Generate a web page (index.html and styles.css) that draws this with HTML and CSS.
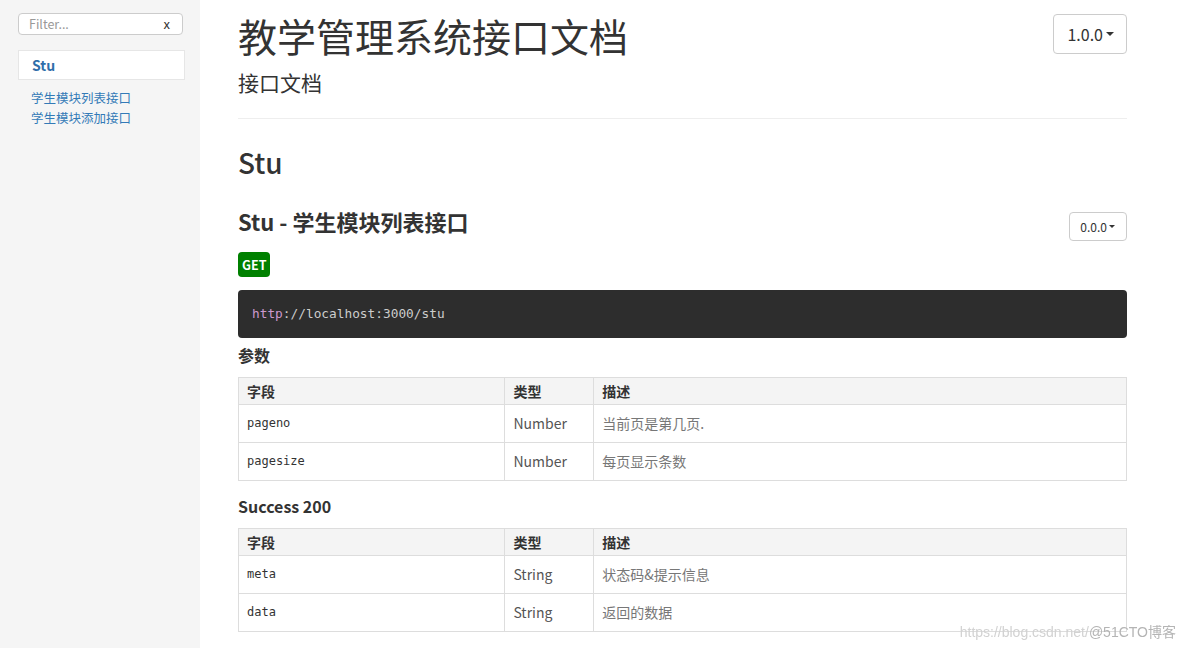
FILE: index.html
```html
<!DOCTYPE html>
<html lang="zh-CN">
<head>
<meta charset="utf-8">
<title>教学管理系统接口文档</title>
<link rel="stylesheet" href="styles.css">
</head>
<body>
<div class="layout">
  <nav class="sidebar">
    <div class="filter">
      <input class="filter-input" type="text" placeholder="Filter...">
      <span class="filter-clear">x</span>
    </div>
    <div class="nav-group">Stu</div>
    <ul class="nav-links">
      <li><a href="#list">学生模块列表接口</a></li>
      <li><a href="#add">学生模块添加接口</a></li>
    </ul>
  </nav>

  <main class="content">
    <header class="page-header">
      <div class="page-heading">
        <h1 class="title">教学管理系统接口文档</h1>
        <p class="subtitle">接口文档</p>
      </div>
      <button class="version-btn version-lg">1.0.0<span class="caret"></span></button>
    </header>
    <hr class="divider">

    <h2 class="group-title">Stu</h2>

    <article class="api" id="list">
      <div class="api-head">
        <h3 class="api-title">Stu - 学生模块列表接口</h3>
        <button class="version-btn version-sm">0.0.0<span class="caret caret-sm"></span></button>
      </div>
      <span class="method">GET</span>
      <pre class="endpoint"><code><span class="tok-proto">http</span>://localhost:3000/stu</code></pre>

      <h4 class="section-title">参数</h4>
      <table class="fields">
        <colgroup><col class="col-field"><col class="col-type"><col class="col-desc"></colgroup>
        <thead>
          <tr><th>字段</th><th>类型</th><th>描述</th></tr>
        </thead>
        <tbody>
          <tr><td class="f-name">pageno</td><td class="f-type">Number</td><td class="f-desc">当前页是第几页.</td></tr>
          <tr><td class="f-name">pagesize</td><td class="f-type">Number</td><td class="f-desc">每页显示条数</td></tr>
        </tbody>
      </table>

      <h4 class="section-title section-success">Success 200</h4>
      <table class="fields">
        <colgroup><col class="col-field"><col class="col-type"><col class="col-desc"></colgroup>
        <thead>
          <tr><th>字段</th><th>类型</th><th>描述</th></tr>
        </thead>
        <tbody>
          <tr><td class="f-name">meta</td><td class="f-type">String</td><td class="f-desc">状态码&amp;提示信息</td></tr>
          <tr><td class="f-name">data</td><td class="f-type">String</td><td class="f-desc">返回的数据</td></tr>
        </tbody>
      </table>
    </article>
  </main>
</div>
<div class="watermark"><span class="wm-url">https://blog.csdn.net/</span><span class="wm-brand">@51CTO博客</span></div>
</body>
</html>
```

FILE: styles.css
```css
html, body {
  margin: 0;
  padding: 0;
}

body {
  font-family: "Noto Sans CJK SC", "Noto Sans", sans-serif;
  font-size: 14px;
  color: #333;
  background: #fff;
}

.layout {
  display: flex;
  min-height: 100vh;
}

/* ---------- sidebar ---------- */
.sidebar {
  flex: none;
  width: 200px;
  box-sizing: border-box;
  background: #f5f5f5;
  padding: 13px 15px 0 18px;
}

.filter {
  display: flex;
  align-items: center;
  width: 165px;
  height: 22px;
  box-sizing: border-box;
  background: #fff;
  border: 1px solid #ccc;
  border-radius: 4px;
  padding: 0 12px 0 10px;
}

.filter-input {
  flex: 1;
  min-width: 0;
  border: 0;
  outline: 0;
  padding: 0;
  margin: 0;
  background: transparent;
  font-family: inherit;
  font-size: 12.5px;
  line-height: 18px;
  color: #333;
}

.filter-input::placeholder {
  color: #999;
}

.filter-clear {
  font-size: 13px;
  line-height: 18px;
  color: #333;
}

.nav-group {
  margin-top: 15px;
  height: 30px;
  box-sizing: border-box;
  background: #fff;
  border: 1px solid #e6e6e6;
  padding-left: 13px;
  line-height: 28px;
  font-size: 14px;
  font-weight: 700;
  color: #2f6ea9;
}

.nav-links {
  list-style: none;
  margin: 8px 0 0;
  padding: 0 0 0 13px;
}

.nav-links li {
  line-height: 20px;
  font-size: 12.5px;
}

.nav-links a {
  color: #337ab7;
  text-decoration: none;
}

/* ---------- main ---------- */
.content {
  flex: 1;
  min-width: 0;
  padding: 0 57px 0 38px;
}

.page-header {
  display: flex;
  justify-content: space-between;
  align-items: flex-start;
}

.title {
  margin: 13px 0 0;
  font-size: 39px;
  line-height: 44px;
  font-weight: 400;
  color: #333;
}

.subtitle {
  margin: 11px 0 0;
  font-size: 21px;
  line-height: 28px;
  font-weight: 400;
  color: #333;
}

.version-btn {
  display: inline-flex;
  align-items: center;
  box-sizing: border-box;
  background: #fff;
  border: 1px solid #ccc;
  border-radius: 4px;
  color: #333;
  font-family: inherit;
  cursor: pointer;
}

.version-lg {
  margin-top: 14px;
  height: 40px;
  padding: 0 12px 0 13px;
  font-size: 16px;
}

.version-sm {
  margin-top: 5px;
  height: 29px;
  padding: 0 11px 0 10px;
  font-size: 12px;
}

.caret {
  display: inline-block;
  width: 0;
  height: 0;
  margin-left: 3px;
  border-left: 4px solid transparent;
  border-right: 4px solid transparent;
  border-top: 4px solid #333;
}

.caret-sm {
  margin-left: 2px;
  border-left-width: 3px;
  border-right-width: 3px;
  border-top-width: 3px;
}

.divider {
  margin: 22px 0 0;
  height: 0;
  border: 0;
  border-top: 1px solid #eee;
}

.group-title {
  margin: 26px 0 0;
  font-size: 28px;
  line-height: 34px;
  font-weight: 500;
  color: #333;
}

.api-head {
  display: flex;
  justify-content: space-between;
  align-items: flex-start;
  margin-top: 28px;
}

.api-title {
  margin: 0;
  font-size: 22px;
  line-height: 28px;
  font-weight: 700;
  color: #333;
}

.method {
  display: block;
  width: fit-content;
  margin-top: 11px;
  height: 25px;
  line-height: 25px;
  padding: 0 4px;
  background: #008000;
  color: #fff;
  border-radius: 4px;
  font-size: 12.5px;
  font-weight: 700;
}

.endpoint {
  margin: 13px 0 0;
  padding: 15px 14px;
  background: #2d2d2d;
  border-radius: 4px;
  font-family: "DejaVu Sans Mono", "Liberation Mono", monospace;
  font-size: 12.8px;
  line-height: 18px;
  color: #ccc;
}

.tok-proto {
  color: #cc99cd;
}

.section-title {
  margin: 6px 0 11px;
  font-size: 16px;
  line-height: 22px;
  font-weight: 700;
  color: #333;
}

.section-success {
  margin-top: 14px;
}

.fields {
  width: 100%;
  border-collapse: collapse;
  table-layout: fixed;
  font-size: 14px;
}

.col-field { width: 30%; }
.col-type { width: 10%; }
.col-desc { width: 60%; }

.fields th,
.fields td {
  border: 1px solid #ddd;
  text-align: left;
  padding: 3px 8px;
}

.fields th {
  background: #f4f4f4;
  line-height: 20px;
  font-weight: 700;
  color: #333;
}

.fields td {
  padding-top: 8px;
  padding-bottom: 8px;
  line-height: 21px;
}

.f-name {
  font-family: "DejaVu Sans Mono", "Liberation Mono", monospace;
  font-size: 12px;
  color: #333;
}

.f-type {
  color: #555;
}

.f-desc {
  color: #777;
}

/* ---------- watermark overlay ---------- */
.watermark {
  position: fixed;
  right: 8px;
  bottom: 8px;
  font-family: "Liberation Sans", Arial, sans-serif;
  font-size: 14px;
  line-height: 16px;
  pointer-events: none;
}

.wm-url {
  color: #d2d2d2;
}

.wm-brand {
  color: #b4b4b4;
}
```
